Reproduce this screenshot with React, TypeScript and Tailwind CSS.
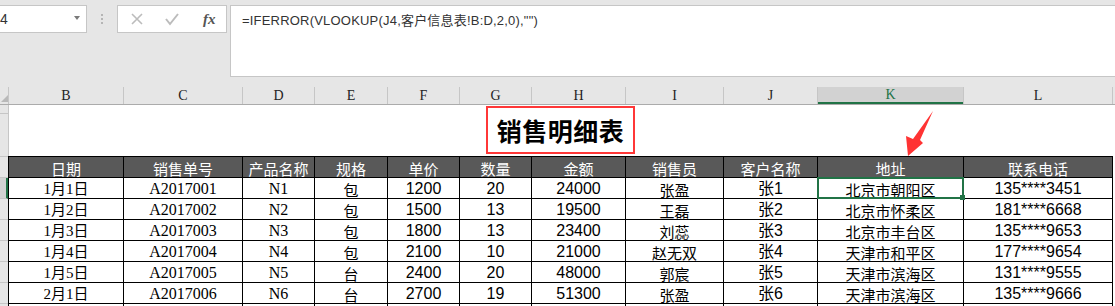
import React from 'react'

type Align = 'serif' | 'sans' | 'cjk'

type Column = {
  letter: string
  title: string
  font: Align
}

const COLUMNS: Column[] = [
  { letter: 'B', title: '日期', font: 'serif' },
  { letter: 'C', title: '销售单号', font: 'serif' },
  { letter: 'D', title: '产品名称', font: 'serif' },
  { letter: 'E', title: '规格', font: 'cjk' },
  { letter: 'F', title: '单价', font: 'sans' },
  { letter: 'G', title: '数量', font: 'sans' },
  { letter: 'H', title: '金额', font: 'sans' },
  { letter: 'I', title: '销售员', font: 'cjk' },
  { letter: 'J', title: '客户名称', font: 'sans' },
  { letter: 'K', title: '地址', font: 'cjk' },
  { letter: 'L', title: '联系电话', font: 'sans' },
]

const ROWS: string[][] = [
  ['1月1日', 'A2017001', 'N1', '包', '1200', '20', '24000', '张盈', '张1', '北京市朝阳区', '135****3451'],
  ['1月2日', 'A2017002', 'N2', '包', '1500', '13', '19500', '王磊', '张2', '北京市怀柔区', '181****6668'],
  ['1月3日', 'A2017003', 'N3', '包', '1800', '13', '23400', '刘蕊', '张3', '北京市丰台区', '135****9653'],
  ['1月4日', 'A2017004', 'N4', '包', '2100', '10', '21000', '赵无双', '张4', '天津市和平区', '177****9654'],
  ['1月5日', 'A2017005', 'N5', '台', '2400', '20', '48000', '郭宸', '张5', '天津市滨海区', '131****9555'],
  ['2月1日', 'A2017006', 'N6', '台', '2700', '19', '51300', '张盈', '张6', '天津市滨海区', '135****9666'],
  ['', '', '', '', '', '', '', '', '', '', ''],
]

const FONT_CLASS: Record<Align, string> = {
  serif: "font-['Liberation_Serif','Noto_Sans_CJK_SC',serif] text-[16px]",
  sans: "font-['Liberation_Sans','Noto_Sans_CJK_SC',sans-serif] text-[16px]",
  cjk: "font-['Noto_Sans_CJK_SC',sans-serif] text-[15px]",
}

function Toolbar() {
  return (
    <div className="flex h-[87px] items-start bg-[#e6e6e6] pt-[5px]">
      {/* name box */}
      <div className="relative flex h-[28px] w-[87px] items-center border-y border-r border-[#c6c6c6] bg-white">
        <span className="text-[14px] leading-none text-[#333] font-['Liberation_Sans',sans-serif]">4</span>
        <span className="absolute right-[6px] top-[10px] h-0 w-0 border-x-[3.5px] border-t-[4px] border-x-transparent border-t-[#7a7a7a]" />
      </div>

      <div className="flex h-[28px] w-[30px] flex-col items-center justify-center gap-[2px]">
        <span className="h-[2px] w-[2px] bg-[#b5b5b5]" />
        <span className="h-[2px] w-[2px] bg-[#b5b5b5]" />
        <span className="h-[2px] w-[2px] bg-[#b5b5b5]" />
      </div>

      {/* cancel / enter / fx */}
      <div className="flex h-[28px] w-[110px] items-center border border-[#c6c6c6] bg-white">
        <svg width="108" height="26" viewBox="0 0 108 26" className="shrink-0">
          <path d="M14 8 L24 18 M24 8 L14 18" stroke="#bcbcbc" strokeWidth="1.6" fill="none" />
          <path d="M48 13 L52 18 L60 8" stroke="#bcbcbc" strokeWidth="2" fill="none" />
          <text
            x="85"
            y="18"
            fontFamily="Liberation Serif, serif"
            fontStyle="italic"
            fontWeight="bold"
            fontSize="15"
            fill="#555"
          >
            fx
          </text>
        </svg>
      </div>

      {/* formula bar */}
      <div className="ml-[3px] h-[72px] flex-1 border-y border-l border-[#c6c6c6] bg-white pl-[11px] pt-[8px]">
        <div className="text-[13px] leading-none text-[#333] font-['Liberation_Sans','Noto_Sans_CJK_SC',sans-serif] tracking-[0.2px]">
          =IFERROR(VLOOKUP(J4,客户信息表!B:D,2,0),"")
        </div>
      </div>
    </div>
  )
}

function RowHeaders() {
  return (
    <div className="flex w-[8px] shrink-0 flex-col bg-[#e6e6e6]">
      <div className="relative h-[18px] border-b border-[#ababab]">
        <span className="absolute bottom-[2px] right-0 h-0 w-0 border-b-[7px] border-l-[7px] border-b-[#b9b9b9] border-l-transparent" />
      </div>
      <div className="h-[9px] border-b border-[#c6c6c6]" />
      <div className="h-[43px] border-b border-[#c6c6c6]" />
      <div className="h-[21px] border-b border-[#c6c6c6]" />
      {ROWS.map((_, i) => (
        <div
          key={i}
          className={`h-[21px] shrink-0 border-b border-[#c6c6c6] ${
            i === 0 ? 'border-r-2 border-r-[#217346] bg-[#d2d2d2]' : ''
          }`}
        />
      ))}
    </div>
  )
}

export default function App() {
  return (
    <div className="relative h-[306px] w-[1115px] overflow-hidden bg-white">
      <Toolbar />

      <div className="flex">
        <RowHeaders />

        <div className="flex-1">
          {/* column letters */}
          <div className="grid h-[18px] grid-cols-[114px_118px_71px_72px_71px_71px_93px_97px_93px_145px_148px_1fr] gap-x-px border-b border-[#ababab] bg-[#c6c6c6] pl-px">
            {COLUMNS.map((c) => (
              <div
                key={c.letter}
                className={`flex items-center justify-center pt-px text-[14px] leading-none font-['Liberation_Serif',serif] ${
                  c.letter === 'K'
                    ? 'border-b-2 border-[#217346] bg-[#d2d2d2] text-[#217346]'
                    : 'bg-[#e6e6e6] text-[#222]'
                }`}
              >
                {c.letter}
              </div>
            ))}
            <div className="bg-[#e6e6e6]" />
          </div>

          {/* title row */}
          <div className="flex h-[51px] items-start justify-center border-l border-[#c6c6c6] pr-[3px]">
            <div className="mt-px flex h-[48px] w-[149px] items-center justify-center border-2 border-[#ff3737] pt-px">
              <span className="text-[25px] font-bold leading-none tracking-[0.5px] text-black font-['Noto_Sans_CJK_SC',sans-serif]">
                销售明细表
              </span>
            </div>
          </div>

          {/* table */}
          <div className="grid w-fit grid-cols-[114px_118px_71px_72px_71px_71px_93px_97px_93px_145px_148px] auto-rows-[20px] gap-px bg-black p-px pb-0">
            {COLUMNS.map((c) => (
              <div
                key={c.title}
                className="flex items-center justify-center bg-[#595959] pt-[2px] text-[15px] leading-none text-white font-['Noto_Sans_CJK_SC',sans-serif]"
              >
                {c.title}
              </div>
            ))}
            {ROWS.map((row, ri) =>
              row.map((value, ci) => {
                const selected = ri === 0 && ci === 9
                return (
                  <div
                    key={`${ri}-${ci}`}
                    className={`relative flex items-center justify-center whitespace-nowrap bg-white pt-[2px] leading-none text-black ${
                      ci === 0 ? "font-['Liberation_Serif','Noto_Sans_CJK_SC',serif] text-[15px]" : FONT_CLASS[COLUMNS[ci].font]
                    }`}
                  >
                    {value}
                    {selected && (
                      <span className="absolute -inset-px z-10 border-2 border-[#217346]">
                        <span className="absolute bottom-[-3px] right-[-3px] h-[5px] w-[5px] bg-[#217346]" />
                      </span>
                    )}
                  </div>
                )
              })
            )}
          </div>
        </div>
      </div>

      {/* annotation arrow */}
      <svg className="absolute left-0 top-0" width="1115" height="306" viewBox="0 0 1115 306">
        <polygon points="933,111 920,140 923,143 908,156 906,136 913,139" fill="#ff3333" />
      </svg>
    </div>
  )
}
